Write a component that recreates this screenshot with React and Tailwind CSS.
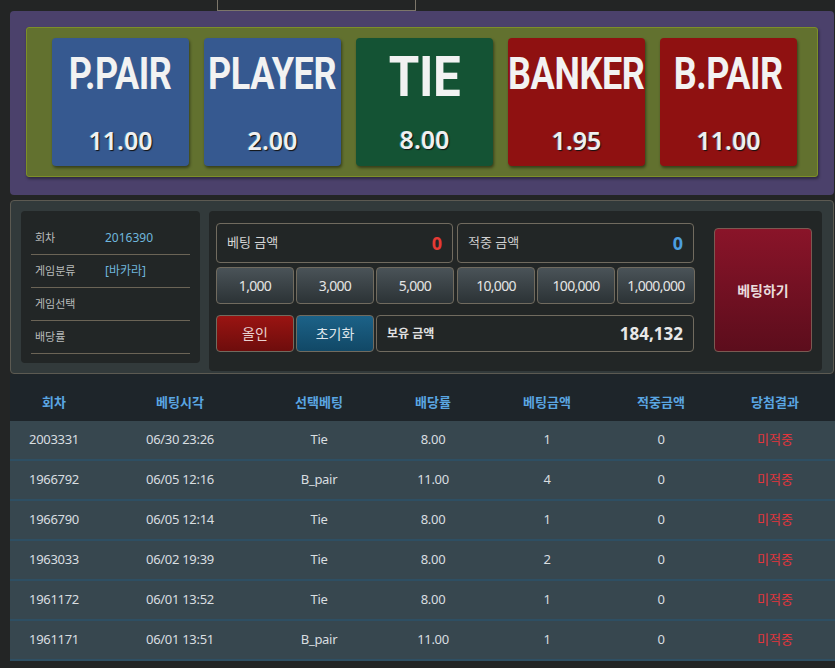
import React from "react";

const cards = [
  { name: "P.PAIR", odds: "11.00", bg: "bg-[#365990]" },
  { name: "PLAYER", odds: "2.00", bg: "bg-[#365990]" },
  { name: "TIE", odds: "8.00", bg: "bg-[#145334]", big: true },
  { name: "BANKER", odds: "1.95", bg: "bg-[#8f1111]" },
  { name: "B.PAIR", odds: "11.00", bg: "bg-[#8f1111]" },
];

const chips = ["1,000", "3,000", "5,000", "10,000", "100,000", "1,000,000"];

const rows = [
  ["2003331", "06/30 23:26", "Tie", "8.00", "1", "0"],
  ["1966792", "06/05 12:16", "B_pair", "11.00", "4", "0"],
  ["1966790", "06/05 12:14", "Tie", "8.00", "1", "0"],
  ["1963033", "06/02 19:39", "Tie", "8.00", "2", "0"],
  ["1961172", "06/01 13:52", "Tie", "8.00", "1", "0"],
  ["1961171", "06/01 13:51", "B_pair", "11.00", "1", "0"],
];

const headers = ["회차", "베팅시각", "선택베팅", "배당률", "베팅금액", "적중금액", "당첨결과"];
const colW = ["w-[88px]", "w-[164px]", "w-[114px]", "w-[114px]", "w-[114px]", "w-[114px]", "w-[114px]"];

const font = "font-['Noto_Sans','Noto_Sans_CJK_KR',sans-serif]";

function InfoRow({ label, value }) {
  return (
    <div className="flex items-center h-[33px] border-b border-[#6b6456] mx-[10px]">
      <span className="w-[74px] pl-[4px] text-[11px] text-[#b9bcbc]">{label}</span>
      <span className="text-[12px] text-[#6fb6dd]">{value}</span>
    </div>
  );
}

export default function App() {
  return (
    <div className={`w-[835px] h-[668px] bg-[#232525] overflow-hidden ${font}`}>
      <div className="flex pl-[217px]">
        <div className="w-[199px] h-[11px] border-x border-b border-[#7c766a] bg-[#232525]"></div>
      </div>
      <div className="ml-[10px] w-[824px] h-[184px] bg-[#4b416b] rounded-[4px] p-[16px] pb-[17px]">
        <div className="h-[150px] bg-[#62712f] rounded-[3px] border border-[#7d8f28] flex pl-[25px] pt-[10px] gap-[15px] shadow-[1px_2px_3px_rgba(0,0,0,0.4)]">
          {cards.map((c) => (
            <div
              key={c.name}
              className={`w-[137px] h-[128px] ${c.bg} rounded-[4px] shadow-[1px_2px_3px_rgba(0,0,0,0.45)] flex flex-col items-center`}
            >
              <div
                className={`font-['Roboto',sans-serif] font-bold text-[#f2f2f2] leading-none whitespace-nowrap ${
                  c.big
                    ? "text-[56px] mt-[11px] h-[60px] tracking-[-0.5px] scale-x-[0.88]"
                    : "text-[45px] mt-[13px] h-[57px] tracking-[-0.5px] scale-x-[0.8]"
                }`}
              >
                {c.name}
              </div>
              <div className={`${c.big ? "mt-[18px]" : "mt-[20px]"} text-[25px] font-semibold text-[#f0f0f0] leading-none [text-shadow:1px_1px_1px_#111,-1px_0_0_rgba(80,200,230,0.4)]`}>
                {c.odds}
              </div>
            </div>
          ))}
        </div>
      </div>

      <div className="ml-[10px] mt-[5px] w-[824px] h-[174px] bg-[#323a3b] border border-[#5c5a52] rounded-[4px] flex pl-[10px] pt-[10px] gap-[9px]">
        <div className="w-[179px] h-[152px] bg-[#222626] rounded-[4px] pt-[11px]">
          <InfoRow label="회차" value="2016390" />
          <InfoRow label="게임분류" value="[바카라]" />
          <InfoRow label="게임선택" value="" />
          <InfoRow label="배당률" value="" />
        </div>
        <div className="w-[613px] h-[160px] bg-[#222626] rounded-[4px] flex pl-[7px] pt-[12px]">
          <div className="w-[481px] flex flex-col">
            <div className="flex gap-[4px]">
              <div className="w-[237px] h-[40px] border border-[#716b5f] rounded-[4px] flex items-center justify-between px-[10px]">
                <span className="text-[13px] text-[#d6d6d6]">베팅 금액</span>
                <span className="text-[18px] font-bold text-[#e53a35]">0</span>
              </div>
              <div className="w-[237px] h-[40px] border border-[#716b5f] rounded-[4px] flex items-center justify-between px-[10px]">
                <span className="text-[13px] text-[#cfcfcf]">적중 금액</span>
                <span className="text-[18px] font-bold text-[#4c9ee0]">0</span>
              </div>
            </div>
            <div className="flex gap-[2px] mt-[4px]">
              {chips.map((c, i) => (
                <div
                  key={c}
                  className={`${i === 3 ? "ml-[1px]" : ""} w-[78px] h-[37px] border border-[#716b5f] rounded-[4px] bg-gradient-to-b from-[#4a5358] to-[#2c3336] flex items-center justify-center text-[14px] text-[#e4e4e4] tracking-[-0.7px]`}
                >
                  {c}
                </div>
              ))}
            </div>
            <div className="flex gap-[2px] mt-[11px]">
              <div className="w-[78px] h-[37px] border border-[#716b5f] rounded-[4px] bg-gradient-to-b from-[#9a1412] to-[#6e0d0c] flex items-center justify-center text-[14px] text-[#e9d2d2]">
                올인
              </div>
              <div className="w-[78px] h-[37px] border border-[#716b5f] rounded-[4px] bg-gradient-to-b from-[#1c6288] to-[#114866] flex items-center justify-center text-[14px] text-[#dde6ec]">
                초기화
              </div>
              <div className="w-[318px] h-[37px] border border-[#716b5f] rounded-[4px] flex items-center justify-between pl-[10px] pr-[10px]">
                <span className="text-[12px] font-bold text-[#e0e0e0]">보유 금액</span>
                <span className="text-[17px] font-bold text-[#e8e8e8]">184,132</span>
              </div>
            </div>
          </div>
          <div className="ml-[17px] mt-[5px] w-[98px] h-[124px] rounded-[4px] border border-[#7a5a52] bg-gradient-to-b from-[#8a1429] to-[#5c0d1c] flex items-center justify-center text-[14px] font-bold text-[#eadcdc]">
            베팅하기
          </div>
        </div>
      </div>

      <div className="ml-[10px] w-[825px]">
        <div className="flex h-[47px] bg-[#1e252a] items-center pt-[11px]">
          {headers.map((h, i) => (
            <div key={h} className={`${colW[i]} text-center text-[13px] font-bold text-[#5aa6e2]`}>
              {h}
            </div>
          ))}
        </div>
        {rows.map((r) => (
          <div key={r[0] + r[1]} className="flex h-[40px] bg-[#37474f] border-b-2 border-[#2e4f63] items-center">
            {r.map((v, i) => (
              <div key={i} className={`${colW[i]} text-center text-[13px] text-[#d9dee0] tracking-[-0.3px]`}>
                {v}
              </div>
            ))}
            <div className={`${colW[6]} text-center text-[13px] text-[#e2353c]`}>미적중</div>
          </div>
        ))}
      </div>
    </div>
  );
}
